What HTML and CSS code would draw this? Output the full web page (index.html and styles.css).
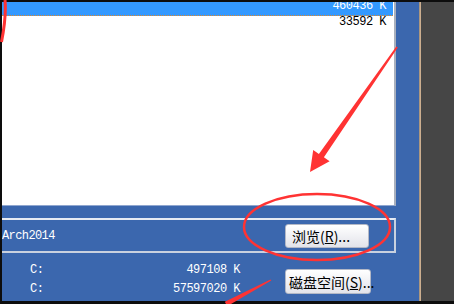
FILE: index.html
```html
<!DOCTYPE html>
<html lang="zh-CN">
  <head>
    <meta charset="UTF-8" />
    <meta name="viewport" content="width=device-width, initial-scale=1.0" />
    <title>磁盘空间</title>
    <link rel="stylesheet" href="styles.css">
  </head>
  <body>
    <div class="frame">
      <div class="dialog">
        <div class="list">
          <div class="row selected">460436 K</div>
          <div class="row">33592 K</div>
        </div>
        <div class="group">
          <span class="path">Arch2014</span>
          <button class="btn browse">浏览(<u>R</u>)...</button>
        </div>
        <div class="drives">
          <div class="drive-list">
            <div class="drive"><span>C:</span><span>497108 K</span></div>
            <div class="drive"><span>C:</span><span>57597020 K</span></div>
          </div>
          <button class="btn disk">磁盘空间(<u>S</u>)...</button>
        </div>
      </div>
      <div class="edge"></div>
      <div class="side"></div>
    </div>
    <svg class="marks" width="454" height="304" viewBox="0 0 454 304">
      <path d="M5 0 Q6.5 16 1.5 42" fill="none" stroke="#ff3333" stroke-width="3" />
      <polygon fill="#ff3333" points="397.8,47.6 323.9,157.3 329.6,161.3 310,172 313.2,149.9 318.9,153.9 396.3,46.4" />
      <ellipse cx="317" cy="227" rx="73" ry="33" fill="none" stroke="#ff3333" stroke-width="2.5" />
      <polygon fill="#ff3333" points="270.5,279.4 271.3,280.6 227.2,306.2 224.8,301.8" />
    </svg>
  </body>
</html>
```

FILE: styles.css
```css
body {
  margin: 0;
  width: 454px;
  height: 304px;
  overflow: hidden;
  position: relative;
  background-color: #0d0d0d;
}
.frame {
  display: flex;
  height: 299px;
  margin: 2px 0 0 2px;
}
.dialog {
  width: 417px;
  background-color: #3b67ae;
  display: flex;
  flex-direction: column;
  overflow: hidden;
}
.list {
  width: 392px;
  height: 203px;
  background-color: #fff;
  border-right: 2px solid #a9b0bd;
  border-bottom: 1px solid #8fa6cf;
  overflow: hidden;
  font: 12px "Liberation Mono", monospace;
  letter-spacing: -0.5px;
  color: #000;
}
.row {
  height: 16px;
  line-height: 13px;
  text-align: right;
  padding-right: 8px;
  box-sizing: border-box;
}
.row.selected {
  margin-top: -2px;
  margin-right: 1px;
  padding-right: 7px;
  background-color: #3399ff;
  color: #fff;
  border-bottom: 1px dotted #e0882a;
}
.group {
  margin-top: 12px;
  margin-left: -2px;
  width: 394px;
  height: 31px;
  border: 2px solid #c9d1df;
  border-left: none;
  border-top-color: #e6ebf3;
  display: flex;
  align-items: center;
}
.path {
  padding-left: 2px;
  color: #fff;
  font: 12px "Liberation Mono", monospace;
  letter-spacing: -0.6px;
}
.btn {
  font: 14px "Noto Sans CJK SC", sans-serif;
  color: #000;
  background: linear-gradient(#ffffff, #e2e3ea);
  border: 1px solid #b3b8c6;
  border-radius: 3px;
  text-align: left;
  white-space: nowrap;
  overflow: visible;
  padding: 0 0 0 6px;
}
.browse {
  margin-left: auto;
  margin-right: 25px;
  width: 84px;
  height: 24px;
}
.drives {
  display: flex;
  align-items: flex-start;
}
.drive-list {
  width: 238px;
  padding-top: 8px;
  font: 12px "Liberation Mono", monospace;
  letter-spacing: -0.5px;
  color: #fff;
}
.drive {
  display: flex;
  justify-content: space-between;
  padding-left: 28px;
  height: 19px;
  line-height: 19px;
}
.disk {
  margin-left: 45px;
  margin-top: 16px;
  width: 86px;
  height: 25px;
  padding-left: 3px;
}
.edge {
  width: 2px;
  background: linear-gradient(90deg, #9c8a76, #dcbb98);
}
.side {
  flex: 1;
  background-color: #464646;
}
.marks {
  position: absolute;
  top: 0;
  left: 0;
  pointer-events: none;
}
```
